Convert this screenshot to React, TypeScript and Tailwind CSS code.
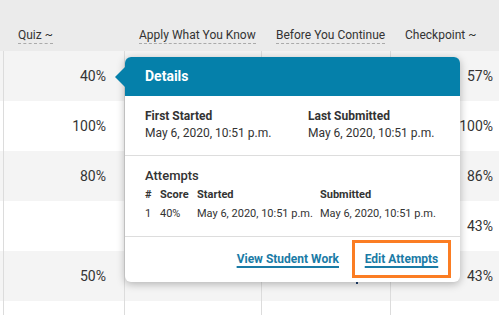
import React from "react";

const rows = [
  { quiz: "40%", check: "57%" },
  { quiz: "100%", check: "100%" },
  { quiz: "80%", check: "86%" },
  { quiz: "", check: "43%" },
  { quiz: "50%", check: "43%" },
  { quiz: "", check: "" },
];

const cols = "grid grid-cols-[4px_121px_137px_129px_108px]";

export default function App() {
  return (
    <div className="relative w-[499px] h-[315px] overflow-hidden bg-white text-[#333] font-['Roboto',sans-serif]">
      {/* header */}
      <div className={`${cols} h-[51px] bg-[#ebebeb] items-end pb-[7px] text-[12px]`}>
        <div />
        <div className="pl-[14px]">
          <span className="border-b border-dashed border-[#aaa] pb-[1px]">Quiz ~</span>
        </div>
        <div className="pl-[14px]">
          <span className="border-b border-dashed border-[#aaa] pb-[1px]">Apply What You Know</span>
        </div>
        <div className="pl-[14px]">
          <span className="border-b border-dashed border-[#aaa] pb-[1px]">Before You Continue</span>
        </div>
        <div className="pl-[14px]">
          <span className="pb-[1px]">Checkpoint ~</span>
        </div>
      </div>

      {/* rows */}
      {rows.map((r, i) => (
        <div
          key={i}
          className={`${cols} h-[50px] text-[14px] ${i % 2 === 0 ? "bg-[#f4f4f4]" : "bg-white"}`}
        >
          <div className="border-r border-[#dcdcdc]" />
          <div className="flex items-center justify-end pr-[18px] border-r border-[#dcdcdc]">{r.quiz}</div>
          <div className="border-r border-[#dcdcdc]" />
          <div className="relative border-r border-[#dcdcdc]">
            {i === 4 && <div className="absolute left-[94px] top-[31px] w-[2px] h-[2px] bg-[#1d3f6e]" />}
          </div>
          <div className="flex items-center justify-end pr-[6px]">{r.check}</div>
        </div>
      ))}

      {/* popover */}
      <div className="absolute left-[125px] top-[57px] w-[335px] h-[225px] bg-white rounded-[6px] shadow-[0_2px_8px_rgba(0,0,0,0.28)]">
        <div className="absolute -left-[10px] top-[10px] w-0 h-0 border-y-[10px] border-y-transparent border-r-[10px] border-r-[#0580aa]" />
        <div className="h-[39px] bg-[#0580aa] rounded-t-[6px] flex items-center pl-[20px] text-white font-bold text-[14px]">
          Details
        </div>
        <div className="h-[60px] flex pl-[20px] pt-[13px] text-[12px] border-b border-[#ddd]">
          <div className="w-[163px]">
            <div className="font-bold leading-[15px]">First Started</div>
            <div className="leading-[16px] mt-[1px]">May 6, 2020, 10:51 p.m.</div>
          </div>
          <div>
            <div className="font-bold leading-[15px]">Last Submitted</div>
            <div className="leading-[16px] mt-[1px]">May 6, 2020, 10:51 p.m.</div>
          </div>
        </div>
        <div className="h-[81px] pl-[20px] pt-[12px] border-b border-[#ddd]">
          <div className="text-[13px] font-medium leading-[16px]">Attempts</div>
          <div className="grid grid-cols-[15px_37px_123px_auto] text-[11px] mt-[4px]">
            <div className="font-bold leading-[14px]">#</div>
            <div className="font-bold leading-[14px]">Score</div>
            <div className="font-bold leading-[14px]">Started</div>
            <div className="font-bold leading-[14px]">Submitted</div>
            <div className="leading-[14px] mt-[5px]">1</div>
            <div className="leading-[14px] mt-[5px]">40%</div>
            <div className="leading-[14px] mt-[5px]">May 6, 2020, 10:51 p.m.</div>
            <div className="leading-[14px] mt-[5px]">May 6, 2020, 10:51 p.m.</div>
          </div>
        </div>
        <div className="flex items-center justify-end h-[44px] pr-[9px] text-[12px] font-bold text-[#1a7ba6]">
          <span className="underline underline-offset-[3px] decoration-[1.5px] mr-[13px]">View Student Work</span>
          <div className="border-[3px] border-[#fb7d23] h-[38px] w-[99px] flex items-center justify-center">
            <span className="underline underline-offset-[3px] decoration-[1.5px]">Edit Attempts</span>
          </div>
        </div>
      </div>
    </div>
  );
}
